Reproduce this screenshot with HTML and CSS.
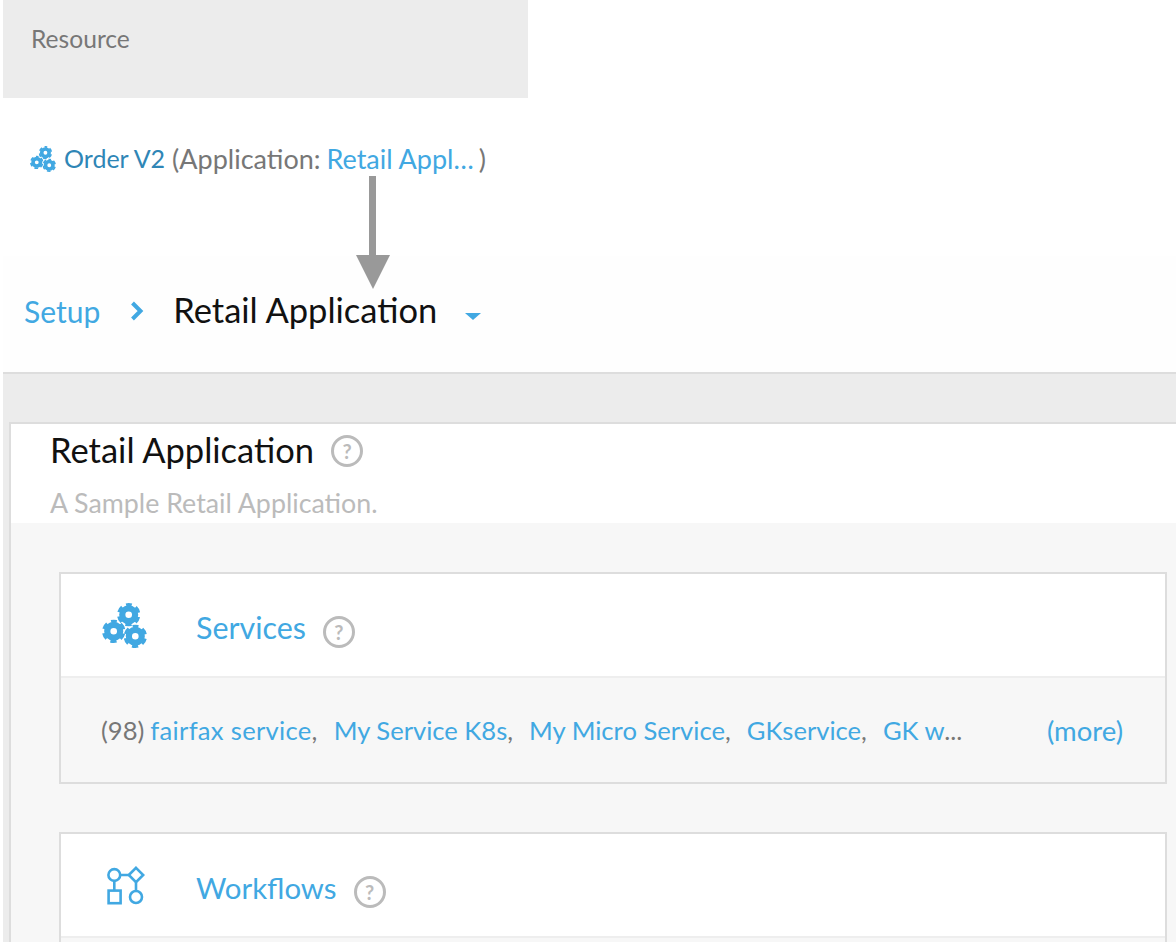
FILE: index.html
```html
<!DOCTYPE html>
<html lang="en">
<head>
  <meta charset="UTF-8">
  <title>Retail Application</title>
  <link rel="stylesheet" href="styles.css">
</head>
<body>
  <svg class="defs" width="0" height="0">
    <symbol id="gear" viewBox="0 0 24 24">
      <circle cx="12" cy="12" r="6.6" fill="none" stroke="currentColor" stroke-width="6.4"/>
      <circle cx="12" cy="12" r="10.5" fill="none" stroke="currentColor" stroke-width="3" stroke-dasharray="6.4 4.6" stroke-dashoffset="3.2" transform="rotate(-90 12 12)"/>
    </symbol>
    <symbol id="gears" viewBox="0 0 45 45">
      <use href="#gear" x="15" y="0" width="23.4" height="23.4"/>
      <use href="#gear" x="0" y="16.6" width="23.4" height="23.4"/>
      <use href="#gear" x="21.6" y="21.6" width="23.4" height="23.4"/>
    </symbol>
  </svg>

  <div class="page">
    <div class="resource-head">Resource</div>

    <div class="resource-row">
      <svg class="icon-small"><use href="#gears"/></svg>
      <a class="link-dark">Order V2</a>
      <span class="muted">(Application: <a class="link app-link">Retail Appl<span class="dots">…</span></a>)</span>
      <div class="arrow"></div>
    </div>

    <div class="breadcrumb">
      <a class="link crumb">Setup</a>
      <svg class="chevron" viewBox="0 0 14 20"><path d="M2.5 2l8 8-8 8" fill="none" stroke="currentColor" stroke-width="4"/></svg>
      <span class="crumb-current">Retail Application</span>
      <span class="caret"></span>
    </div>

    <div class="content">
      <div class="panel">
        <div class="panel-head">
          <div class="title-row">
            <h1>Retail Application</h1>
            <span class="help help-title">?</span>
          </div>
          <p class="desc">A Sample Retail Application.</p>
        </div>

        <div class="panel-body">
          <div class="card">
            <div class="card-head">
              <svg class="icon-large"><use href="#gears"/></svg>
              <a class="link card-title">Services</a>
              <span class="help help-card">?</span>
            </div>
            <div class="card-foot">
              <span class="muted">(98)</span>
              <span class="items">
                <span class="item"><a class="link">fairfax service</a>,</span>
                <span class="item"><a class="link">My Service K8s</a>,</span>
                <span class="item"><a class="link">My Micro Service</a>,</span>
                <span class="item"><a class="link">GKservice</a>,</span>
                <span class="item"><a class="link">GK w</a>...</span>
              </span>
              <a class="link more">(more)</a>
            </div>
          </div>

          <div class="card">
            <div class="card-head">
              <svg class="icon-flow" viewBox="0 0 38 39">
                <g fill="none" stroke="currentColor" stroke-width="2.6">
                  <circle cx="7.3" cy="9" r="5.9"/>
                  <path d="M29 1.8l7.2 7.2-7.2 7.2-7.2-7.2z"/>
                  <rect x="1.6" y="24.6" width="12" height="12.6"/>
                  <circle cx="29" cy="31" r="6"/>
                  <path d="M13.2 9h8.6M7.3 15v9.6M29 16.2V25"/>
                </g>
              </svg>
              <a class="link card-title card-title-flow">Workflows</a>
              <span class="help help-card">?</span>
            </div>
            <div class="card-foot"></div>
          </div>
        </div>
      </div>
    </div>
  </div>
</body>
</html>
```

FILE: styles.css
```css
* {
  box-sizing: border-box;
}
body {
  margin: 0;
  background: #fff;
  font-family: "Lato", "Noto Sans", sans-serif;
  color: #777;
}
.defs {
  position: absolute;
}
.page {
  height: 942px;
  padding-left: 3px;
  overflow: hidden;
}
.link {
  color: #41a8e2;
}
.link-dark {
  color: #2f86b6;
}
.muted {
  color: #777;
}
.resource-head {
  width: 525px;
  height: 98px;
  padding: 24px 0 0 28px;
  background: #ececec;
  font-size: 24.6px;
  line-height: 30px;
}
.resource-row {
  position: relative;
  display: flex;
  align-items: center;
  height: 158px;
  padding: 0 0 38px 27px;
  font-size: 27px;
}
.resource-row .link-dark {
  margin: 0 7px 0 8px;
  font-size: 25px;
}
.app-link {
  margin-left: -1px;
}
.dots {
  letter-spacing: 5px;
}
.icon-small {
  width: 26px;
  height: 26px;
  margin-top: 2px;
  color: #41a8e2;
}
.arrow {
  position: absolute;
  left: 366px;
  top: 78px;
  width: 7px;
  height: 80px;
  background: #999;
}
.arrow::after {
  content: "";
  position: absolute;
  left: -13px;
  top: 79px;
  border-left: 17px solid transparent;
  border-right: 17px solid transparent;
  border-top: 34px solid #999;
}
.breadcrumb {
  display: flex;
  align-items: center;
  height: 118px;
  padding: 0 0 9px 21px;
  background: #fefefe;
  border-bottom: 2px solid #ddd;
}
.crumb {
  margin-top: 2px;
  font-size: 30px;
}
.chevron {
  width: 14px;
  height: 20px;
  margin: 3px 29px 0 30px;
  color: #41a8e2;
}
.crumb-current {
  color: #111;
  font-size: 34.5px;
}
.caret {
  margin: 13px 0 0 28px;
  border-left: 8px solid transparent;
  border-right: 8px solid transparent;
  border-top: 7px solid #41a8e2;
}
.content {
  padding: 48px 0 0 6px;
  background: #ececec;
}
.panel {
  border-top: 2px solid #ddd;
  border-left: 2px solid #ddd;
  background: #f7f7f7;
}
.panel-head {
  height: 99px;
  padding-left: 39px;
  background: #fff;
}
.title-row {
  display: flex;
  align-items: center;
  height: 51px;
}
h1 {
  margin: 0;
  color: #111;
  font-size: 34.5px;
  font-weight: 400;
}
.help {
  display: flex;
  justify-content: center;
  align-items: center;
  width: 32px;
  height: 32px;
  margin-left: 17px;
  border: 3px solid #bbb;
  border-radius: 50%;
  color: #bbb;
  font-size: 20px;
  font-weight: 700;
}
.help-title {
  margin-top: 2px;
}
.desc {
  margin: 12px 0 0;
  color: #bbb;
  font-size: 26.8px;
  line-height: 32px;
}
.panel-body {
  padding: 49px 9px 0 48px;
}
.card {
  height: 212px;
  margin-bottom: 48px;
  border: 2px solid #ddd;
  background: #f7f7f7;
}
.card-head {
  display: flex;
  align-items: center;
  height: 104px;
  padding-left: 41px;
  background: #fff;
  border-bottom: 2px solid #eee;
}
.icon-large {
  width: 45px;
  height: 45px;
  color: #41a8e2;
}
.icon-flow {
  width: 38px;
  height: 39px;
  margin: 0 2px 0 5px;
  color: #41a8e2;
}
.card-title {
  margin: 4px 0 0 49px;
  font-size: 30.4px;
}
.card-title-flow {
  font-size: 29.4px;
}
.help-card {
  margin-top: 13px;
}
.card-foot {
  display: flex;
  align-items: center;
  height: 104px;
  padding: 0 42px 0 40px;
  font-size: 25.6px;
}
.items {
  display: flex;
  gap: 16px;
  margin-left: 6px;
}
.item:first-child {
  letter-spacing: 0.3px;
}
.more {
  margin-left: auto;
  font-size: 27.5px;
}
```
